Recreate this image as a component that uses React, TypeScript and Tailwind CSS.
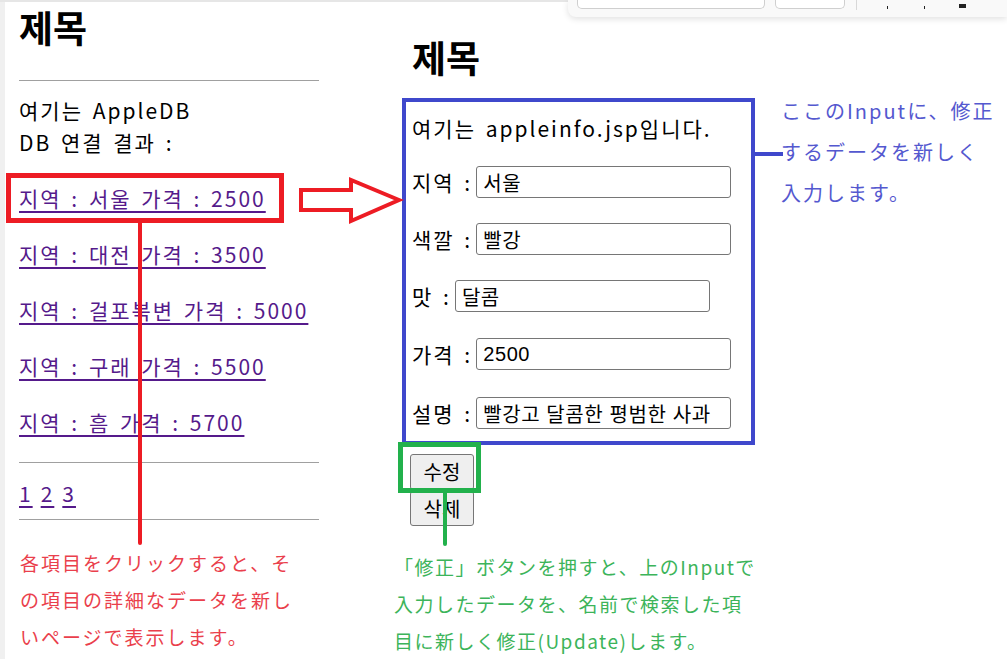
import React from "react";

const KR = { fontFamily: '"Noto Sans CJK KR", "Noto Sans", sans-serif' };

const links = [
  "지역 : 서울 가격 : 2500",
  "지역 : 대전 가격 : 3500",
  "지역 : 걸포북변 가격 : 5000",
  "지역 : 구래 가격 : 5500",
  "지역 : 흠 가격 : 5700",
];

const fields = [
  { label: "지역 :", value: "서울", gap: "mt-[23px]" },
  { label: "색깔 :", value: "빨강", gap: "mt-[25px]" },
  { label: "맛 :", value: "달콤", gap: "mt-[25px]" },
  { label: "가격 :", value: "2500", gap: "mt-[26px]" },
  { label: "설명 :", value: "빨강고 달콤한 평범한 사과", gap: "mt-[27px]" },
];

// body copy: wider spacing, like the original Malgun Gothic rendering
const body = "text-[21px] tracking-[2px] [word-spacing:3px]";

function LeftPane() {
  return (
    <div className="flex h-full w-[325px] shrink-0">
      <div className="w-[5px] bg-[#f0f0f0]" />
      <div className="w-[300px] ml-[14px] pt-[3px]">
        <h1 className="text-[37px] font-bold leading-[44px] text-black">제목</h1>
        <hr className="mt-[31px] border-t border-[#a0a0a0]" />
        <p className={`mt-[13px] ${body} leading-[32px] text-black`}>
          여기는 AppleDB
          <br />
          DB 연결 결과 :
        </p>
        <div className="mt-[24px] flex flex-col gap-[24px]">
          {links.map((t) => (
            <a key={t} href="#" className={`block h-[32px] ${body} whitespace-nowrap leading-[32px] text-[#551a8b] underline underline-offset-[4px]`}>
              {t}
            </a>
          ))}
        </div>
        <hr className="mt-[24px] border-t border-[#a0a0a0]" />
        <div className={`mt-[14px] flex gap-[8px] ${body} leading-[32px] text-[#551a8b]`}>
          <a href="#" className="underline underline-offset-[4px]">1</a>
          <a href="#" className="underline underline-offset-[4px]">2</a>
          <a href="#" className="underline underline-offset-[4px]">3</a>
        </div>
        <hr className="mt-[10px] border-t border-[#a0a0a0]" />
      </div>
    </div>
  );
}

function RightPane() {
  return (
    <div className="flex-1 pl-[77px] pt-[33px]">
      <h1 className="ml-[10px] text-[37px] font-bold leading-[44px] text-black">제목</h1>
      <div className="mt-[19px] h-[347px] w-[353px] border-4 border-[#3f48cc] pl-[6px] pt-[11px]">
        <p className={`${body} leading-[30px] text-black`}>여기는 appleinfo.jsp입니다.</p>
        {fields.map((f) => (
          <div key={f.label} className={`${f.gap} flex h-[32px] items-center`}>
            <span className={`${body} whitespace-nowrap leading-[32px] text-black`}>{f.label}</span>
            <input
              readOnly
              value={f.value}
              className="ml-[4px] h-[32px] w-[255px] rounded-[3px] border border-[#767676] px-[6px] text-[20px] tracking-[0.6px] text-black outline-none"
              style={{ fontFamily: '"Liberation Sans", "Noto Sans CJK KR", sans-serif' }}
            />
          </div>
        ))}
      </div>
      <div className="ml-[8px] mt-[9px] flex flex-col items-start gap-[1px]">
        <button className="h-[36px] w-[64px] rounded-[3px] border border-[#767676] bg-[#efefef] text-[20px] text-black">수정</button>
        <button className="h-[35px] w-[64px] rounded-[3px] border border-[#767676] bg-[#efefef] text-[20px] text-black">삭제</button>
      </div>
    </div>
  );
}

function TopBar() {
  return (
    <div className="absolute right-0 top-0 flex h-[17px] w-[439px] items-start rounded-bl-[8px] bg-[#f9f9f9] shadow-[0_2px_6px_rgba(0,0,0,0.12)]">
      <div className="ml-[9px] h-[9px] w-[188px] rounded-b-[5px] border border-t-0 border-[#cfcfcf] bg-white" />
      <div className="ml-[10px] h-[9px] w-[70px] rounded-b-[5px] border border-t-0 border-[#cfcfcf] bg-white" />
      <div className="ml-[11px] h-[10px] w-px bg-[#d8d8d8]" />
      <div className="ml-[30px] mt-[6px] h-[3px] w-px bg-[#222]" />
      <div className="ml-[36px] mt-[6px] h-[3px] w-px bg-[#222]" />
      <div className="ml-[34px] mt-[4px] h-[4px] w-[7px] bg-[#222]" />
    </div>
  );
}

function Annotations() {
  const jp = { fontFamily: '"Noto Sans CJK JP", "Noto Sans", sans-serif' };
  return (
    <>
      {/* red: list item box, line, arrow */}
      <div className="absolute left-[6px] top-[173px] h-[50px] w-[278px] border-[5px] border-[#ed1c24]" />
      <div className="absolute left-[138px] top-[222px] h-[323px] w-[4px] rounded-b-full bg-[#ed1c24]" />
      <svg className="absolute left-[298px] top-[177px]" width="106" height="48" viewBox="0 0 106 48">
        <polygon
          points="3,13 53,13 53,3 101,23 53,44 53,33 3,33"
          fill="white"
          stroke="#ed1c24"
          strokeWidth="4"
          strokeLinejoin="miter"
        />
      </svg>
      <p
        className="absolute left-[20px] top-[544px] w-[300px] text-[19px] leading-[37px] tracking-[2px] text-[#ea3f4c]"
        style={jp}
      >
        各項目をクリックすると、そ
        <br />
        の項目の詳細なデータを新し
        <br />
        いページで表示します。
      </p>

      {/* blue: connector + note */}
      <div className="absolute left-[755px] top-[152px] h-[4px] w-[28px] bg-[#3f48cc]" />
      <p
        className="absolute left-[781px] top-[90px] w-[226px] text-[20px] leading-[41px] tracking-[2px] text-[#5458cf]"
        style={jp}
      >
        ここのInputに、修正
        <br />
        するデータを新しく
        <br />
        入力します。
      </p>

      {/* green: button box, line, note */}
      <div className="absolute left-[398px] top-[442px] h-[51px] w-[83px] border-[5px] border-[#22b14c]" />
      <div className="absolute left-[443px] top-[493px] h-[53px] w-[4px] rounded-b-full bg-[#22b14c]" />
      <p
        className="absolute left-[394px] top-[548px] w-[380px] text-[19px] leading-[37px] tracking-[1.5px] text-[#3cb45a]"
        style={jp}
      >
        「修正」ボタンを押すと、上のInputで
        <br />
        入力したデータを、名前で検索した項
        <br />
        目に新しく修正(Update)します。
      </p>
    </>
  );
}

export default function App() {
  return (
    <div className="relative h-[659px] w-[1007px] overflow-hidden bg-white" style={KR}>
      <div className="h-[2px] bg-[#e6e6e6]" />
      <div className="flex h-[657px]">
        <LeftPane />
        <RightPane />
      </div>
      <TopBar />
      <Annotations />
    </div>
  );
}
